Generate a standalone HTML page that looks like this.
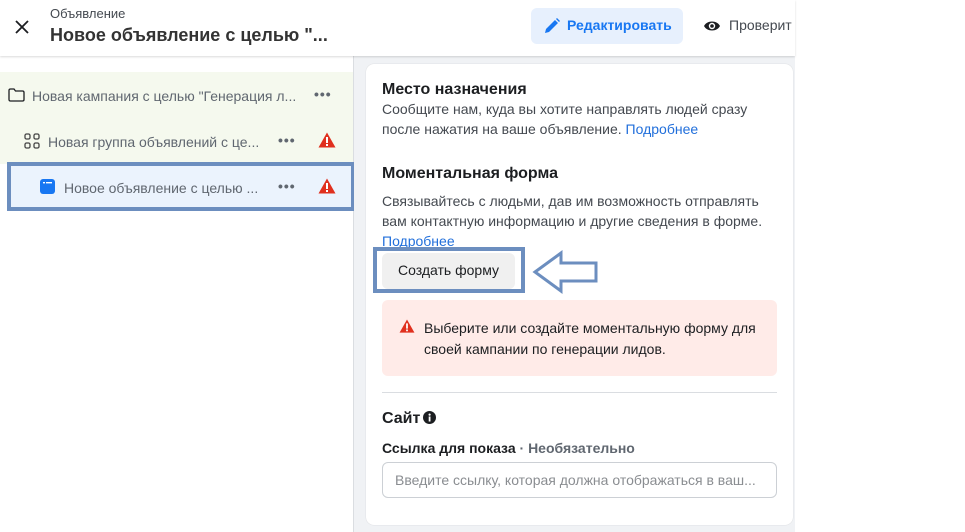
<!DOCTYPE html>
<html><head><meta charset="utf-8"><style>
*{box-sizing:border-box;margin:0;padding:0}
body{width:965px;height:532px;background:#fff;font-family:"Liberation Sans",Arial,sans-serif;position:relative;overflow:hidden;color:#1c1e21}
.abs{position:absolute}
.hdr{left:0;top:0;width:795px;height:56px;background:#fff;box-shadow:0 1px 2px rgba(0,0,0,.15);z-index:2}
.left{left:0;top:56px;width:354px;height:476px;background:#fff;border-right:1px solid #dadde1}
.right{left:354px;top:56px;width:441px;height:476px;background:#f0f2f5}
.card{left:366px;top:64px;width:427px;height:461px;background:#fff;border-radius:8px;box-shadow:0 0 1px rgba(0,0,0,.2)}
.t{font-size:14px;color:#606770;white-space:nowrap}
.dots{font-size:14px;color:#606770;letter-spacing:1px;font-weight:bold}
h3{font-size:16px;font-weight:bold;color:#1c1e21}
.p{font-size:14px;color:#444950;line-height:20px}
a{color:#216fdb;text-decoration:none}
</style></head><body>
<div class="abs hdr">
  <svg class="abs" style="left:14px;top:19px" width="16" height="16" viewBox="0 0 16 16"><path d="M2 2L14 14M14 2L2 14" stroke="#1c1e21" stroke-width="1.8"/></svg>
  <div class="abs" style="left:50px;top:6px;font-size:13px;color:#444950">Объявление</div>
  <div class="abs" style="left:50px;top:25px;font-size:18px;font-weight:bold;color:#333">Новое объявление с целью "...</div>
  <div class="abs" style="left:531px;top:8px;width:152px;height:36px;background:#e7f0fd;border-radius:6px"></div>
  <svg class="abs" style="left:543px;top:17px" width="18" height="18" viewBox="0 0 18 18"><path d="M2 16l1-4 9-9 3 3-9 9z M13 2l1-1 3 3-1 1z" fill="#1877f2"/></svg>
  <div class="abs" style="left:567px;top:17px;font-size:14px;font-weight:bold;color:#1877f2">Редактировать</div>
  <svg class="abs" style="left:703px;top:19px" width="18" height="14" viewBox="0 0 18 14"><path d="M1 7C4 1 14 1 17 7C14 13 4 13 1 7Z" fill="#1c1e21"/><circle cx="9" cy="7" r="3.2" fill="#fff"/><circle cx="9" cy="7" r="1.8" fill="#1c1e21"/></svg>
  <div class="abs" style="left:729px;top:17px;font-size:14px;color:#444950">Проверит</div>
</div>
<div class="abs left"></div>
<div class="abs" style="left:0;top:72px;width:353px;height:92px;background:#f5f9ee"></div>
<div class="abs" style="left:9px;top:164px;width:344px;height:46px;background:#ebf3fd"></div>
<svg class="abs" style="left:8px;top:88px" width="17" height="14" viewBox="0 0 17 14"><path d="M1 2.5Q1 1 2.5 1H6L7.5 3H14.5Q16 3 16 4.5V11.5Q16 13 14.5 13H2.5Q1 13 1 11.5Z" fill="none" stroke="#1c1e21" stroke-width="1.3"/></svg>
<div class="abs t" style="left:32px;top:88px">Новая кампания с целью "Генерация л...</div>
<div class="abs dots" style="left:314px;top:86px">•••</div>
<svg class="abs" style="left:24px;top:133px" width="16" height="16" viewBox="0 0 16 16"><g fill="none" stroke="#444" stroke-width="1.3"><rect x="1" y="1" width="5" height="5" rx="1.5"/><rect x="10" y="1" width="5" height="5" rx="1.5"/><rect x="1" y="10" width="5" height="5" rx="1.5"/><rect x="10" y="10" width="5" height="5" rx="1.5"/></g></svg>
<div class="abs t" style="left:48px;top:134px">Новая группа объявлений с це...</div>
<div class="abs dots" style="left:278px;top:132px">•••</div>
<svg class="abs" style="left:318px;top:132px" width="18" height="16" viewBox="0 0 18 16"><path d="M9 0.5L17.5 15.5H0.5Z" fill="#e0301e"/><rect x="8" y="5" width="2" height="6" fill="#fff"/><rect x="8" y="12" width="2" height="2" fill="#fff"/></svg>
<svg class="abs" style="left:40px;top:179px" width="15" height="15" viewBox="0 0 15 15"><rect width="15" height="15" rx="3" fill="#1877f2"/><rect x="3" y="3" width="2" height="1.4" fill="#fff"/><rect x="6" y="3" width="6" height="1.4" fill="#fff"/></svg>
<div class="abs t" style="left:64px;top:180px">Новое объявление с целью ...</div>
<div class="abs dots" style="left:278px;top:178px">•••</div>
<svg class="abs" style="left:318px;top:178px" width="18" height="16" viewBox="0 0 18 16"><path d="M9 0.5L17.5 15.5H0.5Z" fill="#e0301e"/><rect x="8" y="5" width="2" height="6" fill="#fff"/><rect x="8" y="12" width="2" height="2" fill="#fff"/></svg>
<div class="abs" style="left:7px;top:162px;width:348px;height:49px;border:4px solid #6c8ebf"></div>

<div class="abs right"></div>
<div class="abs card"></div>
<h3 class="abs" style="left:382px;top:81px">Место назначения</h3>
<div class="abs p" style="left:382px;top:99px;width:395px">Сообщите нам, куда вы хотите направлять людей сразу после нажатия на ваше объявление. <a>Подробнее</a></div>
<h3 class="abs" style="left:382px;top:165px">Моментальная форма</h3>
<div class="abs p" style="left:382px;top:191px;width:395px">Связывайтесь с людьми, дав им возможность отправлять вам контактную информацию и другие сведения в форме.<br><a>Подробнее</a></div>
<div class="abs" style="left:382px;top:253px;width:133px;height:36px;background:#f0f0f0;border-radius:6px;font-size:14px;color:#1c1e21;text-align:center;line-height:34px">Создать форму</div>
<div class="abs" style="left:373px;top:247px;width:152px;height:46px;border:4px solid #6c8ebf"></div>
<svg class="abs" style="left:532px;top:250px" width="66" height="44" viewBox="0 0 66 44"><path d="M3 22L29 3V13H64V31H29V41Z" fill="none" stroke="#6c8ebf" stroke-width="3"/></svg>
<div class="abs" style="left:382px;top:300px;width:395px;height:76px;background:#ffebe8;border-radius:6px"></div>
<svg class="abs" style="left:399px;top:319px" width="16" height="14" viewBox="0 0 18 16"><path d="M9 0.5L17.5 15.5H0.5Z" fill="#e0301e"/><rect x="8" y="5" width="2" height="6" fill="#fff"/><rect x="8" y="12" width="2" height="2" fill="#fff"/></svg>
<div class="abs p" style="left:424px;top:318px;width:345px;color:#1c1e21;line-height:21px">Выберите или создайте моментальную форму для своей кампании по генерации лидов.</div>
<div class="abs" style="left:382px;top:392px;width:395px;height:1px;background:#dadde1"></div>
<h3 class="abs" style="left:382px;top:410px">Сайт</h3>
<svg class="abs" style="left:423px;top:411px" width="13" height="13" viewBox="0 0 13 13"><circle cx="6.5" cy="6.5" r="6.5" fill="#1c1e21"/><rect x="5.7" y="5.5" width="1.8" height="5" fill="#fff"/><circle cx="6.6" cy="3.6" r="1.1" fill="#fff"/></svg>
<div class="abs" style="left:382px;top:440px;font-size:14px;font-weight:bold;color:#1c1e21">Ссылка для показа <span style="color:#606770">· Необязательно</span></div>
<div class="abs" style="left:382px;top:462px;width:395px;height:36px;border:1px solid #ccd0d5;border-radius:6px;font-size:14px;color:#8a8d91;padding-left:12px;line-height:34px;white-space:nowrap;overflow:hidden">Введите ссылку, которая должна отображаться в ваш...</div>
</body></html>
